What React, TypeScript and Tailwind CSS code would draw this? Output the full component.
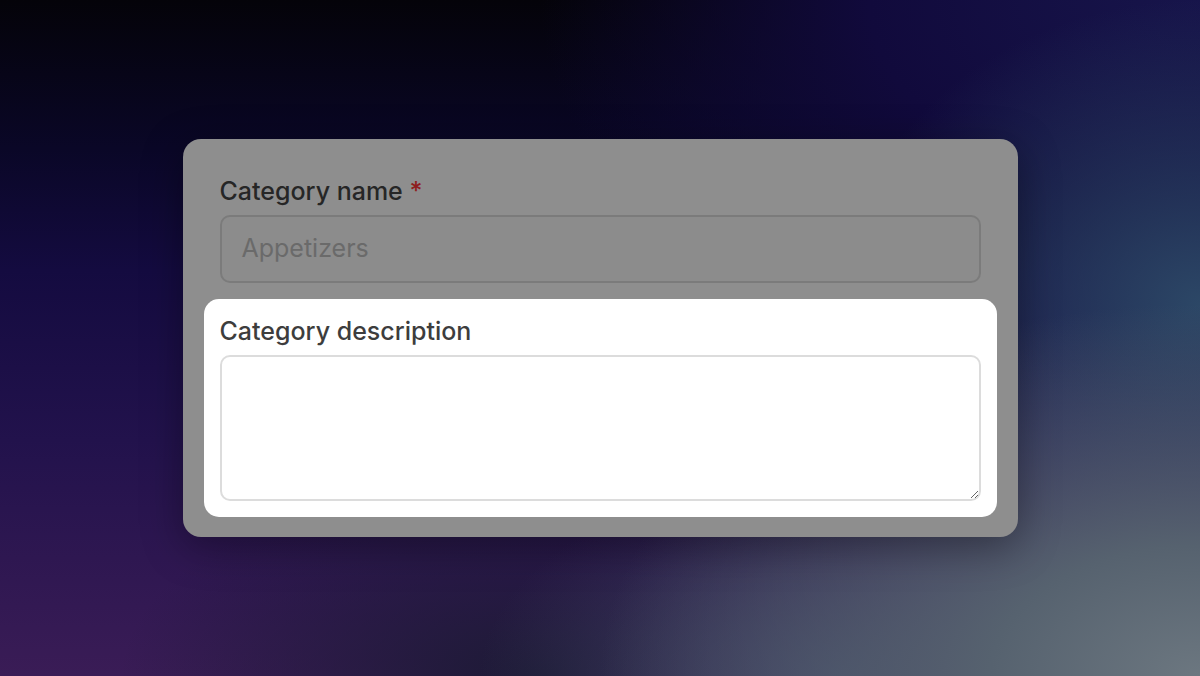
export default function App() {
	return (
		<div className="flex h-[676px] w-full items-center justify-center bg-[radial-gradient(ellipse_50%_55%_at_100%_100%,#6c7780_0%,#56626f_35%,transparent_100%),radial-gradient(ellipse_30%_30%_at_70%_100%,#3f4463_0%,transparent_100%),radial-gradient(ellipse_30%_45%_at_100%_45%,#2c4766_0%,transparent_100%),radial-gradient(ellipse_35%_30%_at_45%_100%,#1c1a35_0%,transparent_100%),radial-gradient(ellipse_55%_60%_at_100%_0%,#17154b_0%,#110a3c_50%,transparent_100%),linear-gradient(to_bottom,#040309_0%,#0a0727_22%,#140b40_40%,#22124c_65%,#3a1c56_100%)] font-['Inter','Noto_Sans',sans-serif]">
			<div className="w-[835px] rounded-[18px] bg-[#8e8e8e] px-[21px] py-5 shadow-[0_10px_40px_rgba(0,0,0,0.35)]">
				<div className="px-4 py-4">
					<label className="mb-2 block text-[25px] font-medium leading-8 text-[#262626]">
						Category name <span className="text-[#8f1d1d]">*</span>
					</label>
					<div className="flex h-[68px] items-center rounded-[10px] border-2 border-[#7b7b7b] bg-[#8c8c8c] px-[20px] text-[25px] text-[#6a6a6a]">
						Appetizers
					</div>
				</div>
				<div className="rounded-[15px] bg-white px-4 py-4">
					<label className="mb-2 block text-[25px] font-medium leading-8 text-[#3d3d3d]">
						Category description
					</label>
					<textarea className="block h-[146px] w-full rounded-[10px] border-2 border-[#dcdcdc] bg-white px-5 py-4 text-[24px] outline-none" />
				</div>
			</div>
		</div>
	)
}
